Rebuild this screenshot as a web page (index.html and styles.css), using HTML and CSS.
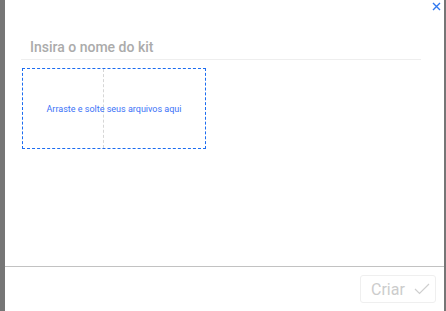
FILE: index.html
```html
<!DOCTYPE html>
<html lang="pt">
<head>
    <meta charset="UTF-8">
    <title>Novo kit</title>
    <link rel="stylesheet" href="styles.css">
</head>
<body>
    <div class="modal">
        <div class="modal-header">
            <button type="button" class="close-button" aria-label="Fechar">
                <svg width="9" height="9" viewBox="0 0 9 9">
                    <path d="M1 1 L8 8 M8 1 L1 8" stroke="#2f78f0" stroke-width="1.4" fill="none"/>
                </svg>
            </button>
        </div>

        <input type="text" class="kit-name" placeholder="Insira o nome do kit">

        <div class="dropzone">
            <span>Arraste e solte seus arquivos aqui</span>
        </div>

        <div class="modal-footer">
            <button type="button" class="create-button" disabled>
                Criar
                <svg width="16" height="12" viewBox="0 0 16 12">
                    <path d="M1 6 L5.5 10.5 L15 1" stroke="#cfcfcf" stroke-width="1.2" fill="none"/>
                </svg>
            </button>
        </div>
    </div>
</body>
</html>
```

FILE: styles.css
```css
* {
    margin: 0;
    padding: 0;
    box-sizing: border-box;
    font-family: Roboto, 'Liberation Sans', sans-serif;
}

body {
    background-color: #767676;
    height: 311px;
    overflow: hidden;
}

.modal {
    display: flex;
    flex-direction: column;
    width: 439px;
    height: 311px;
    margin-left: 5px;
    background-color: #fff;
}

.modal-header {
    display: flex;
    justify-content: flex-end;
    height: 16px;
    padding: 2px 3px 0 0;
}

.close-button {
    display: flex;
    width: 9px;
    height: 9px;
    border: none;
    background: transparent;
    cursor: pointer;
}

.kit-name {
    height: 44px;
    margin: 0 23px 0 16px;
    padding: 19px 9px 0;
    border: none;
    border-bottom: 1px solid #eeeeee;
    font-size: 14px;
    font-weight: 500;
    line-height: 16px;
    color: #555;
    outline: none;
}

.kit-name::placeholder {
    color: #ababab;
}

.dropzone {
    position: relative;
    display: flex;
    align-items: center;
    justify-content: center;
    width: 184px;
    height: 81px;
    margin: 8px 0 0 17px;
    border: 1px dashed #1c6cf0;
    font-size: 9px;
    color: #3b72f7;
}

.dropzone::before {
    content: "";
    position: absolute;
    top: 0;
    bottom: 0;
    left: 80px;
    border-left: 1px dashed #d6d6d6;
}

.dropzone span {
    position: relative;
}

.modal-footer {
    display: flex;
    justify-content: flex-end;
    margin-top: auto;
    height: 45px;
    padding: 8px 8px 0;
    border-top: 1px solid #c2c2c2;
}

.create-button {
    display: flex;
    align-items: center;
    gap: 9px;
    width: 76px;
    height: 28px;
    padding-left: 10px;
    border: 1px solid #efefef;
    border-radius: 3px;
    background-color: #fff;
    font-size: 16px;
    color: #cccccc;
}
```
